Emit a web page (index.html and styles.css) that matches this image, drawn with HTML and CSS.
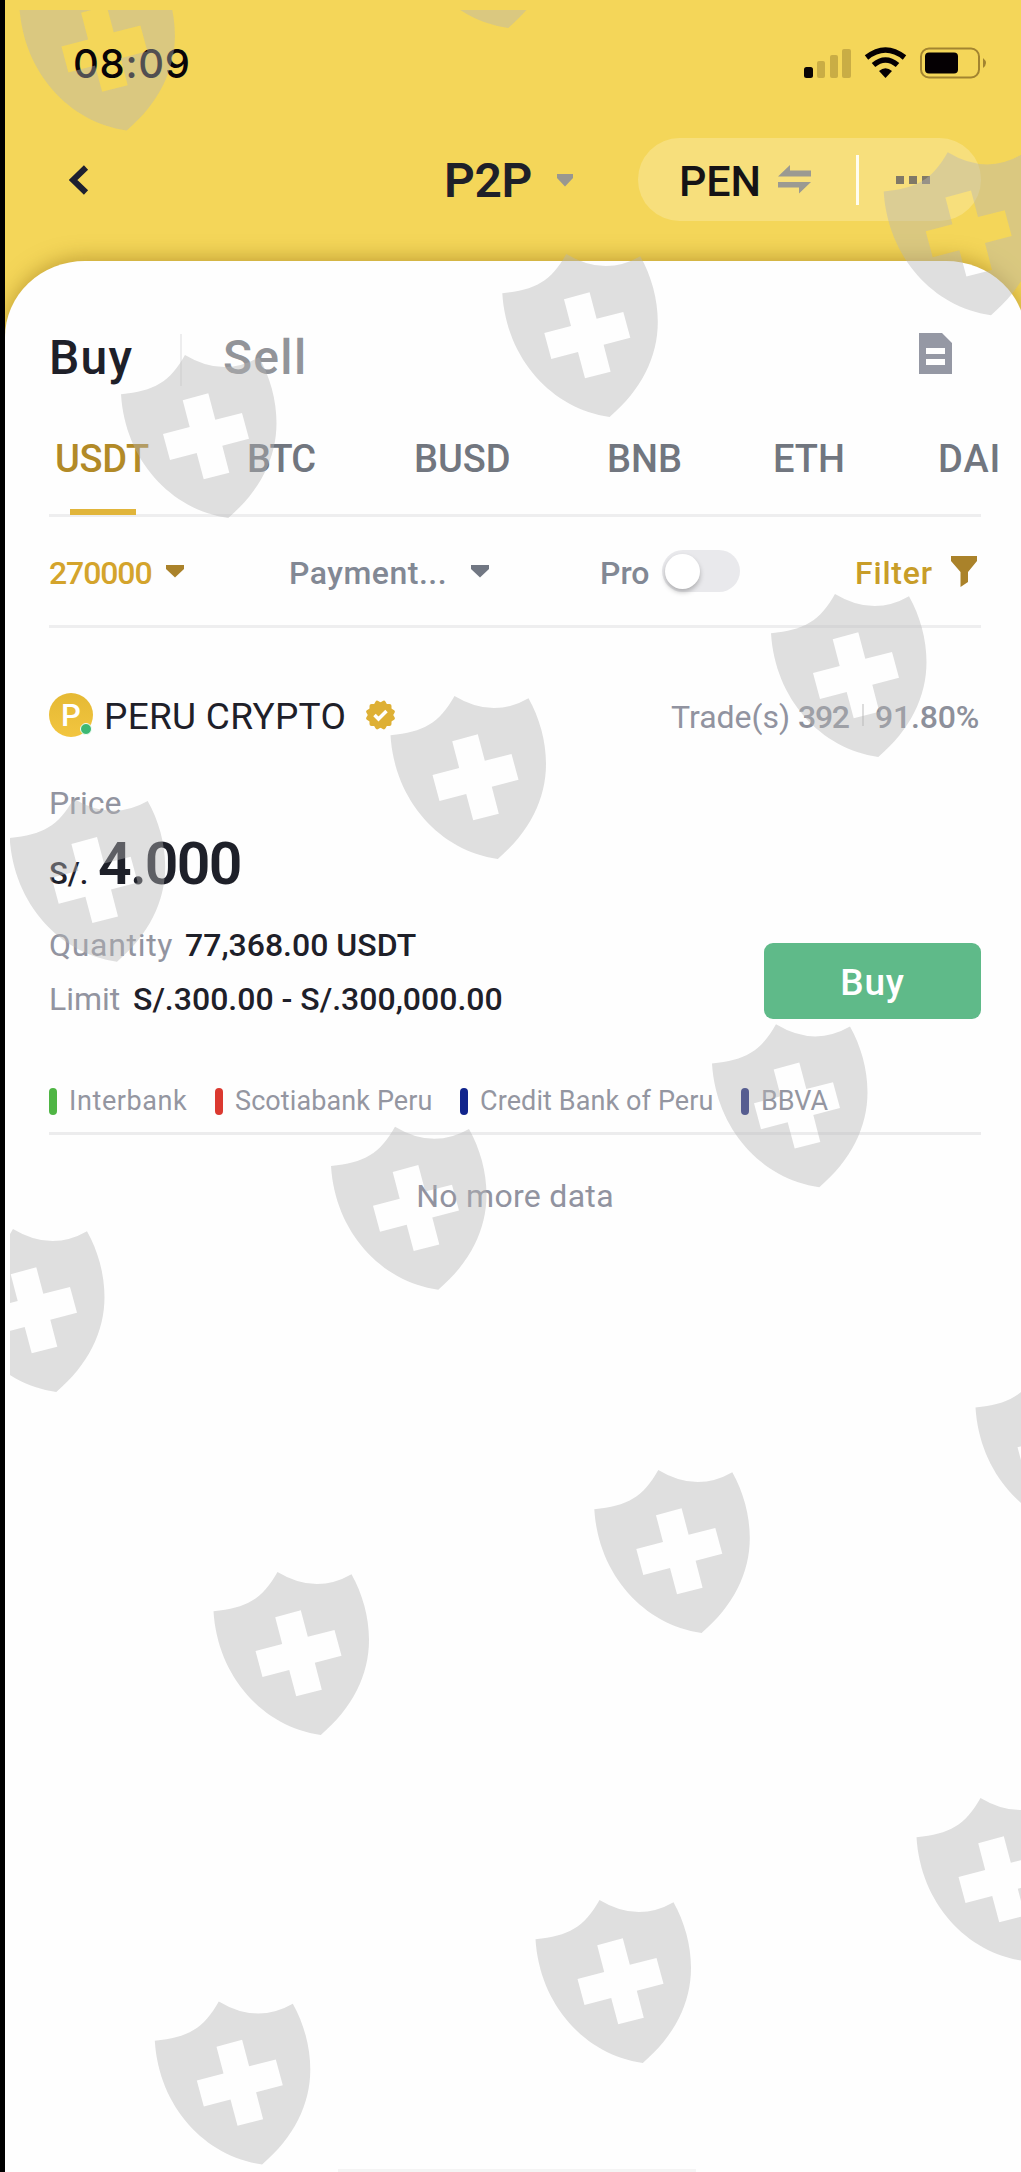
FILE: index.html
```html
<!DOCTYPE html>
<html lang="en">
<head>
<meta charset="utf-8">
<title>P2P</title>
<link rel="stylesheet" href="styles.css">
</head>
<body>
<div class="screen">
  <header class="top">
    <div class="status">
      <span class="time">08:09</span>
      <svg class="status-icons" width="184" height="34" viewBox="0 0 184 34">
        <rect x="0" y="20" width="9" height="11" rx="2.5" fill="#0a0505"/>
        <g fill="#c9ad45"><rect x="13" y="14" width="8" height="17" rx="2"/><rect x="26" y="8" width="8" height="23" rx="2"/><rect x="38" y="2" width="9" height="29" rx="2"/></g>
        <g fill="none" stroke="#050003" stroke-width="5.500">
          <path d="M62.500 10.500Q81.500-4.500 100.500 10.500"/>
          <path d="M69.500 18Q81.500 8 93.500 18"/>
        </g>
        <path d="M75 24Q81.500 18.500 88 24L81.500 31Z" fill="#050003"/>
        <rect x="117" y="1.500" width="58" height="29" rx="8" fill="none" stroke="#a28430" stroke-width="2"/>
        <rect x="121" y="5.500" width="33" height="21" rx="4" fill="#050003"/>
        <path d="M179 11Q185 16 179 21Z" fill="#a28430"/>
      </svg>
    </div>
    <nav class="nav">
      <svg class="back" width="20" height="30" viewBox="0 0 20 30"><path d="M17 2.500L4 15L17 27.500" fill="none" stroke="#1e2030" stroke-width="6"/></svg>
      <div class="title">P2P<svg width="18" height="13" viewBox="0 0 18 13"><path d="M1 0H17V4L9 12.500L1 4Z" fill="#999790"/></svg></div>
      <div class="pill">
        <span class="fiat">PEN</span>
        <svg class="swap" width="33" height="29" viewBox="0 0 33 29"><path d="M0 11.500L12 0V5.500H33V11.500Z M0 17H33L21 28.500V22.500H0Z" fill="#9b9a92"/></svg>
        <i class="split"></i>
        <svg width="34" height="8" viewBox="0 0 34 8"><path d="M0 0H8V8H0Z M13 0H21V8H13Z M26 0H34V8H26Z" fill="#807967"/></svg>
      </div>
    </nav>
  </header>

  <main class="sheet">
    <div class="modes">
      <b class="mode">Buy</b><i class="mode-split"></i><span class="mode muted">Sell</span>
      <svg class="doc" width="33" height="41" viewBox="0 0 33 41"><path fill-rule="evenodd" d="M0 0H23L33 10V41H0Z M7 15V21H26V15Z M7 26V32H26V26Z" fill="#9598a4"/></svg>
    </div>
    <div class="tabs">
      <span class="tab active">USDT</span><span class="tab">BTC</span><span class="tab">BUSD</span><span class="tab">BNB</span><span class="tab">ETH</span><span class="tab">DAI</span>
    </div>
    <div class="filters">
      <span class="amount">270000</span>
      <svg class="caret gold" width="18" height="13" viewBox="0 0 18 13"><path d="M0 0H18V4L9 12.500L0 4Z"/></svg>
      <span class="payment">Payment...</span>
      <svg class="caret" width="18" height="13" viewBox="0 0 18 13"><path d="M0 0H18V4L9 12.500L0 4Z"/></svg>
      <span class="pro">Pro</span>
      <span class="toggle"><i></i></span>
      <span class="filter">Filter</span>
      <svg class="caret gold funnel" width="26" height="31" viewBox="0 0 26 31"><path d="M0 0H26V5L17 16V26L9.500 31V16L0 5Z"/></svg>
    </div>

    <section class="offer">
      <div class="seller">
        <span class="avatar">P<i></i></span>
        <span class="name">PERU CRYPTO</span>
        <svg class="badge" width="31" height="30" viewBox="-15.500 -15 31 30">
          <g fill="#deb035"><rect x="-11" y="-11" width="22" height="22" rx="2"/><rect x="-11" y="-11" width="22" height="22" rx="2" transform="rotate(30)"/><rect x="-11" y="-11" width="22" height="22" rx="2" transform="rotate(60)"/></g>
          <path d="M-6 0L-2 4L6-4" fill="none" stroke="#fff" stroke-width="3.500"/>
        </svg>
        <span class="trades">Trade(s)</span><span class="count">392</span><i class="rate-split"></i><span class="rate">91.80%</span>
      </div>
      <div class="label">Price</div>
      <div class="price"><span class="cur">S/.</span><b>4.000</b></div>
      <div class="details">
        <div class="facts">
          <div><span class="k quantity">Quantity</span><b class="qv">77,368.00 USDT</b></div>
          <div><span class="k limit">Limit</span><b class="lv">S/.300.00 - S/.300,000.00</b></div>
        </div>
        <button class="buy">Buy</button>
      </div>
      <div class="banks">
        <span class="bank green b1">Interbank</span><span class="bank red b2">Scotiabank Peru</span><span class="bank blue b3">Credit Bank of Peru</span><span class="bank navy b4">BBVA</span>
      </div>
    </section>
    <p class="end">No more data</p>
    <div class="home"></div>
  </main>

  <svg class="watermark" width="1011" height="2162" viewBox="10 10 1011 2162">
    <defs>
      <path id="shield" fill-rule="evenodd" d="M0 0Q38 23 74 2.300C85 22 91.500 45 91.500 68C91.500 103 75 136 43.300 163C-14 155-60 105-64 39.300C-31 36-15 27 0 0Z M-2.300 45.300L4.700 72L-22 79L-15 105L11.700 98L18.700 124.300L44.300 117.700L37.300 90.700L64 83.700L57 58L30.300 64.700L23.300 38.300Z"/>
    </defs>
    <g class="shields">
      <use href="#shield" x="83.400" y="-32.500"/><use href="#shield" x="465" y="-135"/>
      <use href="#shield" x="947.700" y="152.300"/><use href="#shield" x="566.300" y="254"/>
      <use href="#shield" x="185" y="355"/><use href="#shield" x="835" y="594"/>
      <use href="#shield" x="454.500" y="696"/><use href="#shield" x="73.700" y="798.700"/>
      <use href="#shield" x="776" y="1024.300"/><use href="#shield" x="395" y="1126.700"/>
      <use href="#shield" x="13" y="1229"/><use href="#shield" x="1039.500" y="1368.300"/>
      <use href="#shield" x="658.300" y="1470"/><use href="#shield" x="277.500" y="1572"/>
      <use href="#shield" x="980.500" y="1798"/><use href="#shield" x="599.500" y="1900"/>
      <use href="#shield" x="218.800" y="2001.500"/>
    </g>
  </svg>
</div>
</body>
</html>
```
FILE: styles.css
```css
* { box-sizing: border-box; }
body { margin: 0; font-family: Roboto, "Liberation Sans", sans-serif; color: #1e2029; }
b { font-weight: 500; }
i { display: block; flex: none; }
svg { display: block; flex: none; }
span { white-space: nowrap; flex: none; }
.screen { position: relative; width: 1021px; height: 2172px; overflow: hidden; border-left: 5px solid #000; background: #f4d659; }
.top { height: 261px; }
.status { display: flex; align-items: center; justify-content: space-between; height: 126px; padding: 0 36px 0 68px; }
.time { font: 500 40px/60px Inter, sans-serif; letter-spacing: 0.7px; color: #080408; padding-top: 1px; }
.status-icons { width: 184px; margin-right: -3px; margin-top: 1px; }
.nav { display: flex; align-items: center; height: 110px; padding-left: 64px; }
.back { width: 20px; margin-top: -2px; }
.title { display: flex; align-items: center; gap: 24px; width: 197px; margin-left: 355px; font-size: 48px; font-weight: 600; line-height: 60px; letter-spacing: -0.3px; }
.title svg { margin-top: -2px; }
.pill { display: flex; align-items: center; width: 343px; height: 83px; margin: -3px 0 0 -3px; border-radius: 42px; background: #f7df7c; padding-left: 41px; }
.fiat { width: 99px; font-size: 43px; font-weight: 500; line-height: 60px; padding-top: 3px; letter-spacing: -0.1px; color: #151316; }
.split { width: 3px; height: 50px; margin: 0 37px 0 45px; background: #fffdf0; }
.sheet { display: flex; flex-direction: column; width: 1021px; height: 1911px; padding: 67px 45px 0 44px; border-radius: 80px 80px 0 0 / 76px 76px 0 0; background: #fefefe; box-shadow: 0 -3px 20px rgba(145, 110, 20, .5); }
.modes { display: flex; align-items: center; height: 60px; flex: none; }
.mode { width: 109px; font-size: 48px; line-height: 60px; letter-spacing: 1.3px; }
.mode-split { width: 2px; height: 52px; margin: 4px 41px 0 22px; background: #ededee; }
.muted { color: #929499; font-weight: 500; width: 120px; }
.doc { margin-left: 576px; margin-top: -9px; }
.tabs { display: flex; flex: none; height: 129px; padding: 41px 0 0; border-bottom: 3px solid #eeeeef; white-space: nowrap; }
.tab { width: 166px; font-size: 38px; line-height: 60px; font-weight: 500; color: #71767f; }
.tab.active { position: relative; width: 198px; padding-left: 6px; color: #b28a27; letter-spacing: -0.3px; }
.tab.active::after { content: ""; position: absolute; left: 21px; bottom: -1px; width: 66px; height: 6px; background: #e1b53b; }
.tab:nth-child(2) { letter-spacing: -1px; }
.tab:nth-child(3) { width: 193px; margin-left: 1px; }
.tab:last-child { letter-spacing: 1px; margin-left: -1px; }
.filters { display: flex; align-items: center; flex: none; height: 111px; border-bottom: 3px solid #eeeeef; font-size: 32px; font-weight: 500; color: #828894; }
.filters > span:not(.toggle) { padding-top: 4px; }
.amount { width: 117px; letter-spacing: -1.1px; color: #d4a42c; }
.caret { fill: #717783; }
.gold { fill: #aa822a; }
.payment { width: 182px; margin-left: 105px; letter-spacing: .5px; }
.pro { width: 62px; margin-left: 111px; }
.toggle { width: 78px; height: 42px; border-radius: 21px; background: #e9e9ec; padding: 4px 0 0 3px; }
.toggle i { width: 35px; height: 35px; border-radius: 50%; background: #fff; box-shadow: 0 3px 5px rgba(0, 0, 0, .25); }
.filter { width: 96px; margin-left: 115px; color: #c89d29; letter-spacing: .8px; }
.seller { display: flex; align-items: center; height: 44px; margin-top: 65px; }
.avatar { position: relative; width: 44px; height: 44px; border-radius: 50%; background: linear-gradient(#e5b934, #f2c53f); font-size: 31px; line-height: 46px; text-align: center; color: #fff; font-weight: 500; }
.avatar i { position: absolute; right: 1px; bottom: 2px; width: 12px; height: 12px; border-radius: 50%; background: #3cb873; border: 1px solid #f4fff8; }
.name { width: 261px; margin-left: 11px; padding-top: 3px; font-size: 37px; letter-spacing: .3px; }
.trades, .count, .rate { padding-top: 4px; font-size: 32px; color: #9193a0; }
.trades { width: 127px; margin-left: 275px; }
.count, .rate { font-weight: 500; color: #8d909b; }
.count { width: 64px; letter-spacing: -1.3px; }
.rate { letter-spacing: -.2px; }
.rate-split { width: 2px; height: 22px; margin-right: 11px; background: #ddd; }
.label { margin-top: 46px; font-size: 32px; line-height: 40px; color: #9294a0; }
.price { display: flex; align-items: baseline; height: 60px; margin-top: 11px; line-height: 60px; }
.cur { width: 49px; font-size: 31px; font-weight: 500; }
.price b { font-size: 59px; font-weight: 600; letter-spacing: -1.8px; }
.details { display: flex; justify-content: space-between; margin-top: 24px; height: 108px; }
.facts > div { display: flex; font-size: 32px; line-height: 54px; }
.k { color: #9294a0; }
.quantity { width: 136px; letter-spacing: .7px; }
.limit { width: 84px; }
.buy { align-self: flex-end; width: 217px; height: 76px; margin-bottom: 7px; border: 0; border-radius: 9px; background: #5fba89; color: #fff; font: 500 37px/60px Roboto, sans-serif; padding: 3px 0 0; letter-spacing: .8px; }
.banks { display: flex; align-items: center; height: 49px; margin-top: 60px; padding-bottom: 16px; border-bottom: 3px solid #ececed; font-size: 27px; }
.bank { display: flex; align-items: center; gap: 12px; color: #9496a1; }
.bank::before { content: ""; width: 8px; height: 27px; border-radius: 4px; background: currentColor; }
.green::before { background: #4fb544; }
.red::before { background: #db3930; }
.blue::before { background: #10248c; }
.navy::before { background: #101c75; }
.b1 { width: 166px; letter-spacing: .6px; }
.b2 { width: 245px; letter-spacing: .1px; }
.b3 { width: 281px; letter-spacing: .1px; }
.end { margin: 41px 0 0; text-align: center; font-size: 32px; line-height: 40px; letter-spacing: .3px; color: #9193a0; }
.home { width: 358px; height: 3px; margin: auto auto 0 289px; background: #f4f4f4; }
.watermark { position: absolute; left: 5px; top: 10px; }
.shields { fill: #b6b6b6; opacity: .425; }
```
